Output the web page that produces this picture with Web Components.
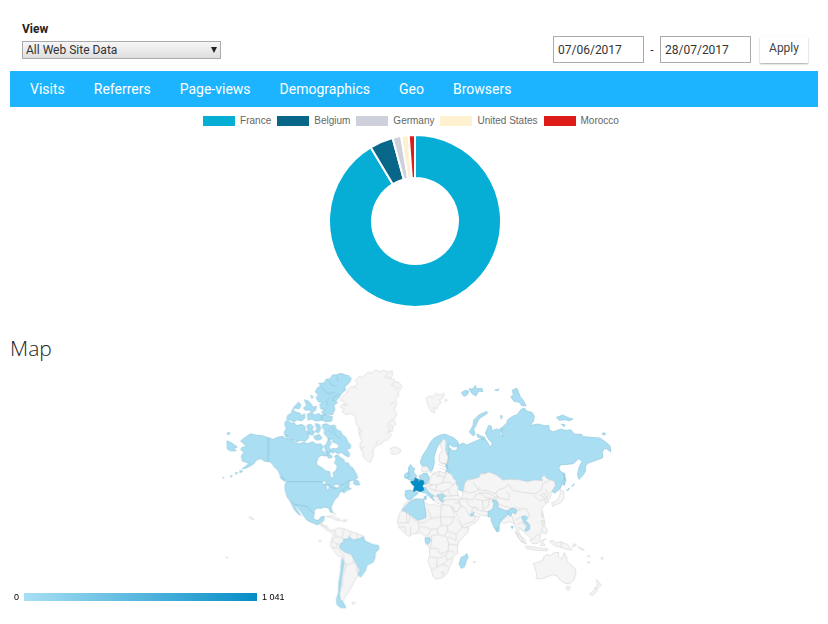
<!DOCTYPE html>
<html lang="en">
<head>
<meta charset="utf-8">
<title>Analytics – Geo</title>
<style>
body{margin:0;background:#fff;color:#333;font-family:Roboto,"Liberation Sans",sans-serif}
</style>
</head>
<body>
<analytics-page></analytics-page>
<script>
const define=(name,html,setup)=>customElements.define(name,class extends HTMLElement{
  connectedCallback(){
    if(this.shadowRoot)return;
    this.attachShadow({mode:'open'}).innerHTML=html;
    if(setup)setup(this,this.shadowRoot);
  }
});

define('view-picker',`<style>
:host{display:block}
label{display:block;font-weight:700;font-size:12px;line-height:16px;color:#222;margin-bottom:4px}
select{display:block;box-sizing:border-box;width:100%;height:18px;padding:0 16px 0 3px;border:1px solid #aaa;border-radius:0;appearance:none;font:12px/16px Roboto,sans-serif;color:#333;background:linear-gradient(#f6f6f6,#dedede)}
.box{display:grid;align-items:center}
.box>*{grid-area:1/1}
svg{justify-self:end;width:6px;height:6px;margin-right:4px;pointer-events:none}
</style><label for="v">View</label><div class="box"><select id="v"><option>All Web Site Data</option></select><svg viewBox="0 0 6 6"><path d="M0 0H6L3 6Z" fill="#222"/></svg></div>`);

define('date-range',`<style>
:host{display:flex;align-items:center;font-size:12px}
input{box-sizing:border-box;width:91px;height:27px;border:1px solid #aaa;padding:0 4px;font:12px Roboto,sans-serif;color:#333;background:#fff}
span{width:16px;text-align:center}
button{height:26px;width:48px;margin-left:9px;padding:0 0 3px;border:0;border-radius:1px;background:#fff;box-shadow:0 1px 2px rgba(0,0,0,.35);font:12px Roboto,sans-serif;color:#444}
</style><input aria-label="Start date" value="07/06/2017"><span>-</span><input aria-label="End date" value="28/07/2017"><button type="button">Apply</button>`);

define('report-nav',`<style>
:host{display:block;background:#1cb4ff}
nav{display:flex;flex-wrap:wrap;gap:0 29px;padding:0 20px}
a{color:#fff;text-decoration:none;font-size:14px;line-height:36px}
</style><nav><a href="#visits">Visits</a><a href="#referrers">Referrers</a><a href="#pages">Page-views</a><a href="#demographics">Demographics</a><a href="#geo">Geo</a><a href="#browsers">Browsers</a></nav>`);

define('donut-chart',`<style>
:host{display:flex;flex-direction:column;align-items:center}
ul{display:flex;flex-wrap:wrap;justify-content:center;list-style:none;margin:0 8px 0 0;padding:0;gap:0 6px;font:10px/12px "Liberation Sans",sans-serif;color:#666}
li{display:flex;align-items:center;gap:5px}
i{width:32px;height:10px}
svg{display:block;width:172px;margin-top:8px}
</style><ul></ul><svg viewBox="-86 -86 172 172" role="img" aria-label="Visits by country"></svg>`,(el,root)=>{
  const data=[['France','#06aed5',329],['Belgium','#086788',15.9],['Germany','#ced0db',5.8],['United States','#fff1d0',5.1],['Morocco','#dd1c1a',4.2]];
  let a=0,svg='';
  const p=(r,d)=>(r*Math.sin(d*Math.PI/180))+' '+(-r*Math.cos(d*Math.PI/180));
  for(const [name,colour,deg] of data){
    const b=a+deg,big=deg>180?1:0;
    svg+=`<path d="M${p(86,a)}A86 86 0 ${big} 1 ${p(86,b)}L${p(43,b)}A43 43 0 ${big} 0 ${p(43,a)}Z" fill="${colour}" stroke="#fff" stroke-width="2"/>`;
    root.querySelector('ul').insertAdjacentHTML('beforeend',`<li><i style="background:${colour}"></i>${name}</li>`);
    a=b;
  }
  root.querySelector('svg').innerHTML=svg;
});

define('geo-scale',`<style>
:host{display:flex;align-items:center;gap:5px;font:9px/12px "Liberation Sans",sans-serif;color:#000}
i{width:233px;height:8px;background:linear-gradient(90deg,#a8dff4,#058dc7)}
</style><span>0</span><i></i><span>1 041</span>`);

define('world-map',`<style>
:host{display:block}
svg{display:block;width:100%}
path{stroke-linejoin:round;stroke-width:2}
.v{fill:#a9def3;stroke:#8fc5da}
.n{fill:#f5f5f5;stroke:#d6d6d6}
.l{fill:none;stroke:#d6d6d6}
.w{fill:#fff;stroke:#8fc5da}
.f{fill:#058dc7;stroke:#0b7fb0}
</style><svg viewBox="-36 0 1236 750" role="img" aria-label="World map of visits">
<defs><filter id="coast" x="-5%" y="-5%" width="110%" height="110%"><feTurbulence type="fractalNoise" baseFrequency=".22" numOctaves="2" seed="4"/><feDisplacementMap in="SourceGraphic" scale="3" xChannelSelector="R" yChannelSelector="G"/></filter></defs>
<g filter="url(#coast)">
<!-- North America -->
<path class="v" d="M145 218 127 212 106 210 92 206 80 214 67 223 62 229 72 236 78 245 66 247 62 254 73 262 67 267 64 276 67 288 77 291 87 296 76 304 66 312 81 308 96 300 104 293 108 286 122 280 132 288 145 290Z
M21 227 32 232 52 246 42 250 48 257 33 258 22 252ZM22 203 29 202 28 208 22 208Z
M60 316 68 319 60 323ZM46 323 53 323 48 328ZM31 332 37 332 33 337ZM8 337 12 337 10 340Z"/>
<path class="v" d="M145 218 160 223 174 216 189 214 196 220 213 222 224 232 237 236 251 232 262 236 278 230 289 238 302 236 309 245 304 255 315 263 322 258 326 266 318 273 303 271 294 278 289 293 292 301 307 309 318 318 329 320 331 334 337 340 341 334 339 323 348 316 352 303 343 294 348 283 344 273 353 269 363 279 372 284 376 296 383 292 390 304 398 308 405 320 410 329 412 339 403 345 388 347 376 353 365 364 377 358 388 358 384 366 394 371 383 375 371 384 366 378 357 381 347 389 338 384 328 385 318 378 315 364 305 350 200 350 191 341 180 329 174 316 164 307 155 294 145 288Z
M404 345 415 348 419 359 407 360 400 355ZM180 332 192 341 195 349 183 341Z
M195 170 204 166 214 175 223 174 228 182 246 178 256 186 254 195 264 201 266 217 256 229 243 226 230 230 212 220 199 212 192 202 199 191 195 181Z
M261 181 272 177 280 185 276 194 284 200 278 211 266 207 263 193ZM286 176 298 178 302 190 296 203 286 200 290 190ZM282 214 298 208 306 220 294 226 284 222Z
M308 178 320 176 330 182 344 180 350 194 362 199 367 210 377 216 383 230 392 240 390 250 378 252 389 265 386 276 374 270 364 262 354 266 344 260 337 265 330 258 337 250 349 252 357 244 350 235 338 231 338 221 326 224 321 215 312 206 314 195 307 188Z
M327 219 334 235 327 245 333 258 326 268 317 258 312 244 319 236ZM320 270 332 269 337 276 326 280Z
M203 151 215 143 217 134 229 142 239 144 246 153 253 145 255 158 246 167 231 164 221 171 210 164 200 163ZM228 119 236 111 243 121 238 131 225 129 218 134 222 126ZM253 104 265 108 275 119 279 127 289 123 287 135 276 143 266 134 256 136 250 129 260 121ZM262 147 274 143 285 150 297 145 307 156 302 166 287 168 275 162 264 165ZM302 151 317 150 337 155 335 168 318 170 302 164 307 158ZM272 91 279 94 276 101ZM193 208 203 213 201 218Z
M291 70 302 61 296 55 312 54 318 43 330 41 337 30 350 29 363 25 376 30 386 32 394 41 386 55 374 65 377 74 363 87 356 99 348 105 351 114 342 120 344 134 337 149 323 147 310 150 305 140 316 133 303 132 299 120 307 111 296 111 288 98 295 89 286 81Z"/>
<path class="v" d="M200 350H305L318 362 326 359 337 369 346 370 357 363 379 354 389 345 387 359 374 370 359 382 354 394 343 405 337 418 333 426 338 443 331 441 326 429 315 426 302 430 290 429 282 438 283 445 272 438 263 425 246 422 226 419 211 409 201 395 195 373 195 358Z"/>
<path class="v" d="M211 409 226 419 246 422 263 425 272 438 283 445 280 458 288 466 298 464 302 456 314 454 309 467 301 474 293 479 279 474 263 467 252 454 244 441 231 425 222 419 242 451 236 448 223 434 216 419Z"/>
<path class="w" d="M305 352 313 346 320 356 312 358ZM317 360 328 362 326 377 320 372ZM337 361 350 357 361 361 352 370 346 367Z"/>
<!-- channels between the far northern islands -->
<path fill="none" stroke="#8fc5da" d="M301 62 316 80 329 86 344 82M325 48 335 60 350 63M351 34 354 49M330 98 318 107 323 121M360 86 339 97 340 111M336 188 346 211 361 222M326 195 337 205"/>
<!-- Greenland, Iceland and Svalbard -->
<g transform="translate(300)"><path class="n" d="M60 126 68 117 76 122 72 110 61 106 66 95 78 86 84 75 93 65 105 65 112 54 105 46 117 34 129 37 142 22 156 24 165 15 181 20 190 15 204 21 216 17 217 31 210 40 222 42 224 51 237 52 247 66 234 80 236 93 226 102 230 118 222 131 230 149 220 164 228 178 219 183 217 199 205 197 214 209 202 225 190 227 184 238 174 239 163 248 158 258 160 271 155 281 151 292 142 288 131 278 128 263 122 252 119 239 125 226 119 214 115 200 118 189 109 177 107 162 103 151 92 145 77 149 66 141 72 132Z
M210 252 221 246 235 249 243 254 239 263 225 269 212 264 217 258Z
M318 100 329 93 338 96 348 84 359 91 372 85 369 98 357 104 364 113 355 120 350 132 340 127 344 144 333 139 325 122ZM374 103 382 105 376 110Z"/>
<path class="l" d="M203 25 195 36 209 39M223 51 213 60 225 65M239 65 224 75M222 110 209 120M220 162 204 174 218 187M201 181 211 195 199 206M113 189 125 198 118 211M78 122 86 115M105 65 112 72M122 251 135 244M166 238 175 225"/></g>
<!-- Russia -->
<g transform="translate(630)"><path class="v" d="M54 260 59 248 69 258 80 255 83 244 74 240 80 233 89 239 99 234 110 240 130 231 146 224 164 220 172 231 181 247 187 235 175 222 166 204 176 181 184 184 186 198 199 191 207 195 213 187 217 192 209 205 219 216 214 201 219 184 230 175 232 165 247 154 261 149 273 133 283 129 291 139 306 142 313 154 310 169 300 181 324 177 344 182 356 181 358 196 371 200 391 192 406 196 422 194 433 207 454 208 461 215 485 217 509 219 524 229 540 242 542 261 531 252 522 250 517 263 518 278 500 285 474 294 466 304 466 319 458 331 447 343 442 329 447 306 456 289 446 281 429 296 412 298 392 299 386 309 393 321 404 325 404 337 399 353 389 372 373 384 365 378 376 362 373 349 351 341 342 331 334 338 338 347 312 345 293 350 266 344 239 343 218 345 199 330 177 321 164 326 151 326 148 336 130 342 112 345 104 354 106 369 100 379 87 374 74 363 80 350 65 338 55 326 57 317 46 304 48 285Z
M118 201 129 181 131 165 146 150 170 139 172 145 153 157 144 166 138 181 131 193 135 206 130 213Z
M95 82 106 76 116 78 113 88 103 94 97 89ZM117 71 128 72 136 61 139 71 156 70 158 80 146 78 137 93 126 86ZM242 96 250 88 246 76 260 69 266 83 271 96 279 104 288 122 275 122 268 112 252 109ZM379 157 398 150 415 158 429 162 418 167 404 164 388 166ZM393 177 405 179 402 185ZM516 205 524 203 526 209 518 209ZM194 75 207 72 203 77ZM212 151 217 153 213 162ZM140 207 165 218 161 223 143 216Z
M401 326 407 342 403 362 399 355 403 340Z"/>
<path class="n" d="M104 354 112 345 130 342 148 336 151 326 164 326 177 321 199 330 218 345 239 343 266 344 293 350 312 345 338 347 334 338 342 331 351 341 373 349 376 362 365 378 360 400 335 430 345 475 320 535 275 495 260 480 240 470 220 475 200 455 150 450 110 430 95 400 100 379Z"/></g>
<!-- Europe -->
<path class="n" d="M620 345 636 332 640 325 657 319 678 324 687 324 696 330 700 341 709 347 707 356 715 366 712 380 717 396 739 407 740 425 713 434 690 430 667 419 650 414 640 401 625 390 616 375Z"/>
<path class="v" d="M601 289 608 271 621 251 631 232 642 219 658 211 675 207 686 212 701 218 714 230 713 243 700 246 687 236 686 262 683 290 681 307 677 321 685 319 680 300 685 274 677 255 671 228 660 232 650 250 642 276 643 294 638 313 632 320 623 302 611 306 603 299Z"/>
<path class="n" d="M661 236 670 222 678 228 676 253 684 276 681 293 669 298 657 290 657 270 666 257ZM606 305 621 304 627 318 613 321 604 318ZM591 348 599 350 595 356Z"/>
<path class="v" d="M565 308 572 298 576 306 584 311 580 321 590 333 581 345 567 345 561 339 570 332 566 323ZM555 327 565 320 569 330 563 341 553 338ZM598 332 611 325 622 325 627 341 622 355 610 359 600 354ZM556 377 571 375 587 380 595 384 581 395 573 404 560 402 555 391ZM602 370 616 367 627 383 642 393 635 395 642 407 633 399 617 384 606 382ZM612 395 619 392 618 404 612 402ZM650 390 667 386 677 393 666 399 673 414 661 407Z"/>
<path class="f" d="M572 349 583 347 586 338 596 344 610 347 612 355 607 362 612 374 601 380 589 376 580 379 583 364 574 355Z"/>
<path class="l" d="M630 331 627 358 650 359 668 353 671 334 651 333 641 321M650 359 646 377 668 380 685 372 699 360 708 348M668 353 689 351 699 360M646 377 627 370M668 380 661 399 642 392M682 372 693 392 715 391M622 366 637 361M660 317 655 334M677 319 675 339M668 391 693 394M676 400 671 414M658 292 678 296 689 294M655 298 678 307M658 309 685 317M596 349 606 328M580 336 596 334M628 322 639 326"/>
<!-- Middle East and Central Asia -->
<path class="n" d="M664 415 677 405 696 402 716 405 737 400 758 405 766 390 786 383 810 386 830 398 836 419 818 436 807 440 787 438 770 433 769 426 758 430 753 441 762 454 780 454 768 472 746 484 730 490 719 466 706 441 697 424 680 425Z"/>
<path class="l" d="M715 404 723 422 712 440 698 437M719 420 736 430 747 450 768 453 759 469 731 478M738 404 750 425 768 427M765 401 787 407 789 438M775 380 797 397 819 401 837 393M787 407 808 402 828 405M808 402 805 422 792 431M731 377 748 384 770 378 780 365M759 352 775 374 801 377 828 386 833 375 855 368 865 356M825 384 835 398 865 404 870 391 858 380M704 415 721 412M865 356 878 376 909 382 947 386 966 371 968 356 988 346M825 405 838 419 869 428 901 430M940 389 957 407 975 402M975 372 986 388 977 406"/>
<path class="v" d="M804 440 818 432 822 416 816 407 827 405 834 417 832 426 853 436 865 438 872 431 885 432 888 438 880 449 869 441 861 451 843 467 838 478 837 491 831 501 823 489 815 471 812 455 804 455ZM749 449 760 442 762 447 756 454Z"/>
<!-- Africa -->
<g transform="translate(495 225)"><path class="n" d="M59 190 73 181 96 176 116 178 118 188 132 195 148 193 163 199 180 194 197 197 204 213 211 231 224 250 232 263 252 262 248 277 233 293 221 307 217 323 218 339 205 349 202 365 195 377 188 397 174 413 153 417 144 410 137 385 129 364 134 344 133 325 122 309 121 291 108 279 87 281 71 289 57 279 41 261 37 243 43 221 51 210Z"/>
<path class="v" d="M72 187 91 177 115 178 118 194 123 222 122 233 98 241 84 230 58 213 50 211 59 202ZM120 294 134 292 136 303 129 313 121 308ZM222 372 228 352 240 347 245 340 249 351 244 362 238 380 229 385Z"/>
<path class="l" d="M65 211 75 229 71 249 41 248M76 230 100 249 102 270 91 281M100 249 117 247 139 235 166 231 169 197M139 235 128 206M166 231 169 256 157 266 138 268 122 262 104 260M166 231 206 231M206 231 201 250 188 256 187 273 213 282 231 263M169 256 188 256M157 266 158 283 177 288 187 274M138 268 132 283 122 286M138 287 158 283M140 287 139 310 135 325 158 326 165 342 189 332 191 313 186 292 177 288M213 282 213 301 190 291M191 313 217 315M134 350 165 354 181 346 189 332 207 336M155 356 156 380 141 389M156 380 174 373 186 360 183 348M174 373 190 380M186 360 201 355M166 398 174 395 178 403 169 407M65 211V249M41 262 59 260 63 277M77 260 76 286"/></g>
<!-- South America -->
<path class="n" d="M299 474 311 480 321 483 324 492 335 496 344 494 356 488 373 491 393 499 415 507 432 514 410 560 416 627 399 656 389 675 375 696 368 712 374 724 360 720 353 704 361 653 370 580 352 570 340 555 331 538 334 524 339 511 335 502 316 493Z"/>
<g transform="translate(0 345)"><path class="v" d="M371 177 383 178 387 170 400 180 418 176 430 170 435 183 458 193 475 196 477 207 466 217 465 231 460 246 441 255 436 272 422 291 413 284 420 270 411 253 401 236 393 222 373 215 358 202 363 189 370 188ZM365 236 372 243 369 269 364 292 362 319 358 342 360 357 371 369 377 383 363 383 351 374 349 358 356 337 356 309 362 275Z"/>
<path class="l" d="M343 148 347 169 370 174 370 188M347 169 335 184 351 190 349 204 333 201M351 190 363 199M355 206 371 225M371 225 370 241 379 255 400 247 401 236M379 255 374 275 367 293 367 319M400 247 411 259 409 271 417 280M371 147 367 170M393 154 389 170M410 160 412 176M315 118 302 137 321 142"/>
<path class="n" d="M319 109 336 106 352 115 364 121 350 121 333 113ZM370 119 381 119 377 125 366 124ZM396 367 406 368 398 373ZM86 110 96 112 102 118 94 118ZM17 231 23 231 21 235ZM296 181 305 182 299 185ZM339 96 347 103 341 101Z"/></g>
<!-- East Asia and Oceania -->
<g transform="translate(720 315)"><path class="n" d="M145 124 157 115 173 122 184 116 200 117 209 138 186 143 190 160 201 180 190 183 179 172 175 183 185 204 192 217 183 215 174 198 168 177 161 152 155 137ZM241 75 253 69 259 87 266 96 256 98 251 82ZM275 98 292 90 301 72 300 58 311 64 312 83 302 98 285 105 278 110Z
M164 185 178 195 195 209 199 222 187 217 174 202ZM196 229 217 230 243 235 263 236 261 242 231 241 200 236ZM209 209 223 205 232 192 242 200 234 219 218 221ZM242 212 258 205 248 215 255 226 243 228ZM269 213 281 211 285 219 304 215 323 224 337 240 317 237 300 231 280 225ZM243 152 252 152 251 165 261 177 260 190 250 190 244 179 249 169ZM245 128 250 137 245 140ZM340 221 349 225 338 231ZM353 230 373 239 367 241ZM381 257 391 258 387 262ZM422 264 430 262 426 269ZM381 276 390 276 387 280ZM39 275 47 275 42 279Z
M220 280 230 278 248 271 251 260 264 252 269 258 282 248 297 247 294 258 305 267 313 248 319 261 322 276 337 287 345 296 348 310 342 328 330 341 315 340 299 329 292 318 277 314 261 320 243 327 228 325 230 311ZM318 350 331 350 326 361 321 360ZM410 328 417 338 424 344 415 353 403 356 412 345ZM407 354 413 361 397 377 388 372 399 364Z"/>
<path class="v" d="M184 140 195 137 203 145 196 151 209 165 208 178 198 184 195 178 202 170 189 150ZM145 120 158 115 171 121 166 132 157 126 151 139 144 132ZM107 176 114 173 119 180 113 186ZM154 168 159 169 158 175 154 174ZM319 61 328 54 325 60ZM303 37 313 29 318 31 309 43ZM335 47 343 41 338 49Z"/>
<path class="l" d="M168 149 182 141M172 164 184 157 201 162M304 216 302 235"/></g>
</g></svg>`);

define('analytics-page',`<style>
:host{display:block;padding:21px 10px 8px}
header{display:flex;justify-content:space-between;align-items:flex-end;padding:0 10px 0 12px;margin-bottom:12px}
view-picker{flex:0 1 199px}
date-range{margin-bottom:-4px}
donut-chart{margin:8px 0 0 2px}
h2{margin:27px 0 3px;font:300 21px/28px "Open Sans","Noto Sans",sans-serif;color:#222}
.map{display:grid;align-items:end}
.map>*{grid-area:1/1}
world-map{width:51%;justify-self:center}
geo-scale{padding:0 0 12px 4px}
</style>
<header><view-picker></view-picker><date-range></date-range></header>
<report-nav></report-nav>
<donut-chart></donut-chart>
<h2>Map</h2>
<div class="map"><world-map></world-map><geo-scale></geo-scale></div>`);
</script>
</body>
</html>
